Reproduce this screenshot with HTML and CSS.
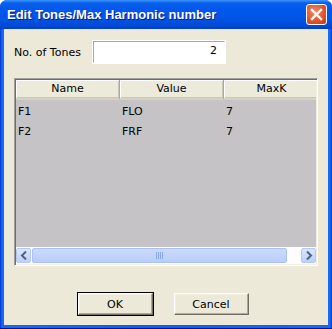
FILE: index.html
```html
<!DOCTYPE html>
<html>
<head>
    <title>Edit Tones/Max Harmonic number</title>
    <link rel="stylesheet" href="styles.css">
</head>
<body>
    <div class="window">
        <div class="titlebar">
            <span class="title">Edit Tones/Max Harmonic number</span>
            <span class="close">
                <svg width="13" height="13" viewBox="0 0 13 13">
                    <path d="M2 2 L11 11 M11 2 L2 11" stroke="#fff" stroke-width="2.4" stroke-linecap="square"/>
                </svg>
            </span>
        </div>
        <div class="client">
            <div class="tones-row">
                <label class="tones-label" for="tones">No. of Tones</label>
                <input type="text" id="tones" class="tones-input" value="2">
            </div>

            <div class="list">
                <div class="list-head">
                    <div class="hcell c1">Name</div>
                    <div class="hcell c2">Value</div>
                    <div class="hcell c3">MaxK</div>
                </div>
                <div class="list-body">
                    <div class="row">
                        <div class="cell c1">F1</div>
                        <div class="cell c2">FLO</div>
                        <div class="cell c3">7</div>
                    </div>
                    <div class="row">
                        <div class="cell c1">F2</div>
                        <div class="cell c2">FRF</div>
                        <div class="cell c3">7</div>
                    </div>
                </div>
                <div class="hscroll">
                    <div class="sbtn">
                        <svg width="8" height="9" viewBox="0 0 8 9"><path d="M6 0.5 L2 4.5 L6 8.5" fill="none" stroke="#4d6185" stroke-width="2"/></svg>
                    </div>
                    <div class="thumb">
                        <svg width="8" height="7" viewBox="0 0 8 7"><path d="M0.5 0 V7 M2.5 0 V7 M4.5 0 V7 M6.5 0 V7" stroke="#8aa8e8" stroke-width="1"/></svg>
                    </div>
                    <div class="track"></div>
                    <div class="sbtn">
                        <svg width="8" height="9" viewBox="0 0 8 9"><path d="M2 0.5 L6 4.5 L2 8.5" fill="none" stroke="#4d6185" stroke-width="2"/></svg>
                    </div>
                </div>
            </div>

            <div class="buttons">
                <button class="btn default">OK</button>
                <button class="btn">Cancel</button>
            </div>
        </div>
    </div>
</body>
</html>
```

FILE: styles.css
```css
html, body {
    margin: 0;
    padding: 0;
    background: #ffffff;
}

body {
    font-family: Tahoma, "DejaVu Sans", sans-serif;
    font-size: 11px;
    color: #000;
}

.window {
    width: 332px;
    height: 329px;
    box-sizing: border-box;
    background: linear-gradient(to right, #0831d9 0, #166aee 2px, #0a5ef0 50%, #166aee calc(100% - 2px), #0831d9 100%);
    padding: 0 4px 4px 4px;
    display: flex;
    flex-direction: column;
    border-radius: 7px 7px 0 0;
    box-shadow: inset 0 -1px 0 #00138c;
}

.titlebar {
    height: 29px;
    margin: 0 -4px;
    padding: 0 5px 0 7px;
    border-radius: 7px 7px 0 0;
    background: linear-gradient(to bottom, #3d95ff 0, #0a5fe9 3px, #0058ee 8px, #0055e5 18px, #0049d6 26px, #003dc2 29px);
    display: flex;
    align-items: center;
    justify-content: space-between;
}

.title {
    color: #ffffff;
    font-family: "Liberation Sans", Arial, sans-serif;
    font-weight: bold;
    font-size: 13px;
    text-shadow: 1px 1px 0 #0a1883;
    margin-top: -1px;
}

.close {
    width: 21px;
    height: 21px;
    box-sizing: border-box;
    border: 1px solid #ffffff;
    border-radius: 3px;
    background: radial-gradient(circle at 40% 35%, #f08a6a 0, #e2562e 55%, #c23a12 100%);
    display: flex;
    align-items: center;
    justify-content: center;
}

.client {
    flex: 1;
    background: #ece9d8;
    display: flex;
    flex-direction: column;
    padding: 11px 10px 0 10px;
}

.tones-row {
    display: flex;
    align-items: center;
    height: 24px;
}

.tones-label {
    width: 78px;
}

.tones-input {
    width: 134px;
    height: 24px;
    box-sizing: border-box;
    border: 2px solid;
    border-color: #a7a6aa #fefefe #fefefe #a7a6aa;
    outline: 1px solid #ffffff;
    outline-offset: -1px;
    background: #ffffff;
    text-align: right;
    font-family: inherit;
    font-size: 11px;
    padding: 0 7px 3px 2px;
    margin: 0;
}

.list {
    margin-top: 14px;
    width: 304px;
    height: 188px;
    box-sizing: border-box;
    border: 1px solid;
    border-color: #a0a0a0 #ffffff #ffffff #a0a0a0;
    box-shadow: inset 1px 1px 0 #716f64, inset -1px -1px 0 #f1efe2;
    background: #c5c3c6;
    display: flex;
    flex-direction: column;
    padding: 1px;
}

.list-head {
    display: flex;
    height: 20px;
    overflow: hidden;
    flex-shrink: 0;
}

.hcell {
    box-sizing: border-box;
    height: 20px;
    background: #ebeadb;
    border-right: 1px solid #aca899;
    border-bottom: 2px solid #d6d2c2;
    box-shadow: inset 1px 1px 0 #ffffff, inset -1px -1px 0 #cbc7b8;
    text-align: center;
    line-height: 17px;
    flex-shrink: 0;
}

.c1 { width: 104px; }
.c2 { width: 104px; }
.c3 { width: 94px; }

.hcell.c3 {
    width: 96px;
}

.list-body {
    flex: 1;
    padding-top: 1px;
}

.row {
    display: flex;
    height: 20px;
    align-items: center;
}

.cell {
    padding-left: 2px;
    box-sizing: border-box;
    flex-shrink: 0;
}

.hscroll {
    height: 17px;
    display: flex;
    align-items: stretch;
    background: #fdfdfc;
    padding: 1px 0;
    box-sizing: border-box;
    gap: 1px;
}

.sbtn {
    width: 15px;
    box-sizing: border-box;
    border: 1px solid #b4c8f6;
    border-radius: 2px;
    background: linear-gradient(to bottom, #dbe6fd, #bdd0fa);
    display: flex;
    align-items: center;
    justify-content: center;
}

.thumb {
    width: 255px;
    box-sizing: border-box;
    border: 1px solid #a8c0f4;
    border-radius: 2px;
    background: linear-gradient(to bottom, #cbdafc, #b9cefb);
    display: flex;
    align-items: center;
    justify-content: center;
}

.track {
    flex: 1;
}

.buttons {
    display: flex;
    justify-content: center;
    gap: 21px;
    margin-top: 27px;
    padding-right: 6px;
}

.btn {
    width: 75px;
    height: 22px;
    box-sizing: border-box;
    font-family: inherit;
    font-size: 11px;
    background: #ece9d8;
    border: 1px solid;
    border-color: #ffffff #716f64 #716f64 #ffffff;
    box-shadow: inset -1px -1px 0 #aca899, inset 1px 1px 0 #f1efe2;
    padding: 0;
    margin: 0;
    color: #000;
}

.btn.default {
    outline: 1px solid #000000;
}
```
